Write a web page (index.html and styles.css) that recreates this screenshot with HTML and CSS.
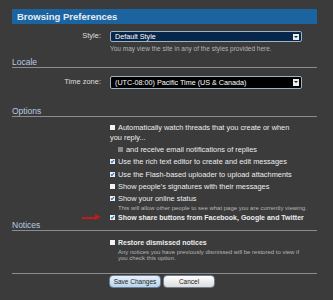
FILE: index.html
```html
<!DOCTYPE html>
<html lang="en">
  <head>
    <meta charset="UTF-8" />
    <title>Browsing Preferences</title>
    <link rel="stylesheet" href="styles.css">
  </head>
  <body>
    <div class="page">
      <h2 class="title">Browsing Preferences</h2>

      <div class="row">
        <label class="label">Style:</label>
        <div class="control">
          <div class="select navy">Default Style<span class="arrow"></span></div>
          <p class="hint first">You may view the site in any of the styles provided here.</p>
        </div>
      </div>

      <h3 class="section locale">Locale</h3>
      <div class="row">
        <label class="label tz">Time zone:</label>
        <div class="control">
          <div class="select black">(UTC-08:00) Pacific Time (US &amp; Canada)<span class="arrow"></span></div>
        </div>
      </div>

      <h3 class="section options">Options</h3>
      <div class="row">
        <div class="label"></div>
        <div class="control">
          <div class="check watch">
            <span class="box"></span>Automatically watch threads that you create or when you reply...
          </div>
          <div class="check sub"><span class="box grey"></span>and receive email notifications of replies</div>
          <div class="check"><span class="box on"></span>Use the rich text editor to create and edit messages</div>
          <div class="check"><span class="box on"></span>Use the Flash-based uploader to upload attachments</div>
          <div class="check"><span class="box"></span>Show people's signatures with their messages</div>
          <div class="check"><span class="box on"></span>Show your online status</div>
          <p class="hint indent">This will allow other people to see what page you are currently viewing.</p>
          <div class="check strong share">
            <span class="pointer"></span><span class="box on"></span>Show share buttons from Facebook, Google and Twitter
          </div>
        </div>
      </div>

      <h3 class="section notices">Notices</h3>
      <div class="row">
        <div class="label"></div>
        <div class="control">
          <div class="check strong restore"><span class="box"></span>Restore dismissed notices</div>
          <p class="hint indent narrow">Any notices you have previously dismissed will be restored to view if you check this option.</p>
        </div>
      </div>

      <div class="buttons">
        <button class="button primary">Save Changes</button>
        <button class="button">Cancel</button>
      </div>
    </div>
  </body>
</html>
```

FILE: styles.css
```css
body {
  margin: 0;
  background: #3b3b3b;
  font-family: "Liberation Sans", Arial, sans-serif;
  color: #ececec;
  width: 333px;
  height: 300px;
  overflow: hidden;
}
.page {
  padding: 9px 16px 0 12px;
}
.title {
  margin: 0;
  height: 15px;
  line-height: 15px;
  padding-left: 5px;
  background: #1b64a0;
  color: #e4eef7;
  font-size: 9.5px;
  font-weight: bold;
}
.row {
  display: grid;
  grid-template-columns: 89px 1fr;
  column-gap: 9px;
}
.label {
  text-align: right;
  font-size: 7.5px;
  line-height: 10px;
  color: #ddd;
  padding-top: 7px;
}
.label.tz {
  padding-top: 9px;
}
.control {
  min-width: 0;
}
.select {
  position: relative;
  border: 1px solid #9db3c8;
  border-radius: 2px;
  padding-left: 4px;
  font-size: 7.2px;
  color: #fff;
  margin-right: 15px;
}
.select.navy {
  background: #08264a;
  height: 9px;
  line-height: 9px;
  margin-top: 7px;
}
.select.black {
  background: #000;
  height: 11px;
  line-height: 11px;
  margin-top: 8px;
}
.arrow {
  position: absolute;
  right: 2px;
  top: 1.5px;
  width: 6px;
  height: 6px;
  background: #eee;
}
.arrow::after {
  content: "";
  position: absolute;
  left: 1px;
  top: 2px;
  border-left: 2px solid transparent;
  border-right: 2px solid transparent;
  border-top: 2px solid #222;
}
.black .arrow {
  top: 2px;
  height: 7px;
}
.hint {
  margin: 0;
  font-size: 6px;
  line-height: 6px;
  color: #b5b5b5;
}
.hint.first {
  margin-top: 4px;
  font-size: 6.5px;
}
.hint.indent {
  padding-left: 8px;
  margin-top: 1px;
}
.hint.narrow {
  margin-right: 10px;
}
.section {
  margin: 0;
  border-bottom: 1px solid #8c8c8c;
  font-size: 8.5px;
  font-weight: normal;
  color: #b7cbe0;
  line-height: 10px;
}
.section.locale {
  margin-top: 5px;
}
.section.options {
  margin-top: 17px;
}
.section.notices {
  margin-top: -2px;
  line-height: 9px;
}
.check {
  position: relative;
  font-size: 7.4px;
  line-height: 10px;
  margin-top: 2.2px;
}
.check.watch {
  margin-top: 6px;
  padding-right: 14px;
}
.check.sub {
  padding-left: 8px;
}
.check.strong {
  font-weight: bold;
  font-size: 7px;
}
.check.share {
  margin-top: 2px;
}
.check.restore {
  margin-top: 7px;
}
.box {
  display: inline-block;
  width: 5px;
  height: 5px;
  margin-right: 3px;
  background: #f2f2f2;
  vertical-align: 0;
}
.box.grey {
  background: #8a8a8a;
}
.box.on {
  background: #e8eef6 url("data:image/svg+xml,%3Csvg xmlns='http://www.w3.org/2000/svg' viewBox='0 0 5 5'%3E%3Cpath d='M1 2.5l1 1L4 1' fill='none' stroke='%231f5fa8' stroke-width='1.1'/%3E%3C/svg%3E") no-repeat;
}
.pointer {
  position: absolute;
  left: -28px;
  top: 4px;
  width: 14px;
  height: 2px;
  background: #c41a1a;
}
.pointer::after {
  content: "";
  position: absolute;
  right: -5px;
  top: -2.5px;
  border-top: 3.5px solid transparent;
  border-bottom: 3.5px solid transparent;
  border-left: 6px solid #c41a1a;
}
.buttons {
  margin-top: 12px;
  padding-top: 1px;
  border-top: 1px solid #8c8c8c;
  display: flex;
  gap: 2px;
  padding-left: 97px;
}
.button {
  width: 52px;
  height: 13px;
  padding: 0;
  border: 1px solid #6c7f92;
  border-radius: 4px;
  font-family: inherit;
  font-size: 6.5px;
  color: #222;
  background: linear-gradient(#ffffff, #dcdcdc);
}
.button.primary {
  background: linear-gradient(#e9f3fc, #b6d3ee);
}
```
